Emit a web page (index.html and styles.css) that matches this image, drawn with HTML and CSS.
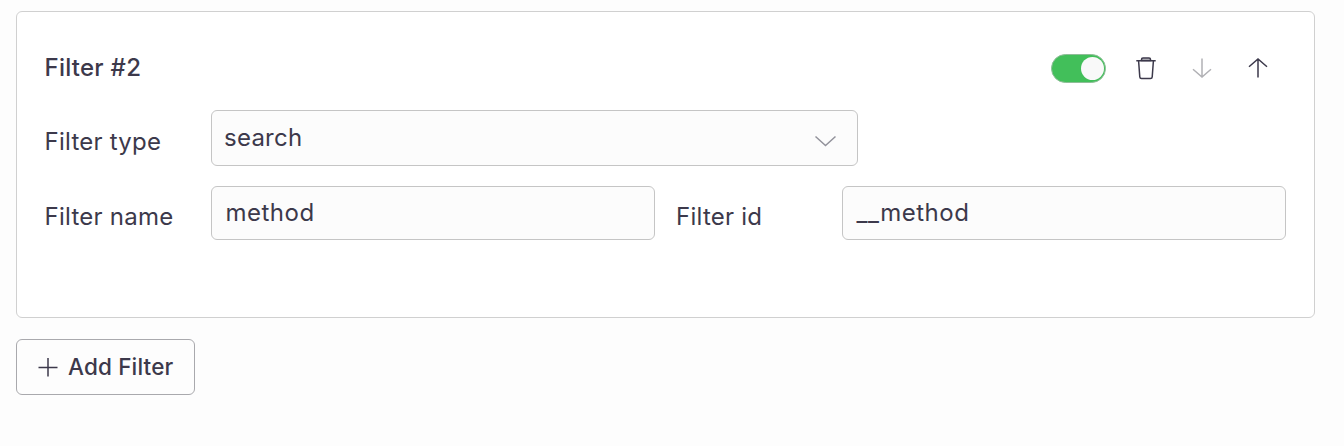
FILE: index.html
```html
<!DOCTYPE html>
<html lang="en">
<head>
<meta charset="utf-8">
<title>Filters</title>
<link rel="stylesheet" href="styles.css">
</head>
<body>
<section class="card">
  <header class="card-header">
    <h2 class="title">Filter #2</h2>
    <div class="actions">
      <span class="toggle" role="switch" aria-checked="true"><span class="knob"></span></span>
      <svg class="icon" viewBox="0 0 28 28"><path class="lid" d="M9.500 6.500V5.500q0-1.500 1.500-1.500h6q1.500 0 1.500 1.500v1z"/><path d="M4.300 6.700h19.400M6.600 7l1.200 16q.1 1.500 1.700 1.500h9q1.600 0 1.700-1.500l1.200-16"/></svg>
      <svg class="icon muted" viewBox="0 0 28 28"><path d="M14 4.500v18.500M5 15.300L14 23l9-7.700"/></svg>
      <svg class="icon" viewBox="0 0 28 28"><path d="M14 23.500V5M5 12.700L14 5l9 7.700"/></svg>
    </div>
  </header>
  <div class="row type-row">
    <span class="label">Filter type</span>
    <div class="select"><span>search</span><svg class="chevron" viewBox="0 0 24 14"><path d="M2.500 2.500l10 9 10-9"/></svg></div>
  </div>
  <div class="row name-row">
    <span class="label">Filter name</span>
    <div class="field">method</div>
    <span class="label id-label">Filter id</span>
    <div class="field">__method</div>
  </div>
</section>
<button class="add"><svg class="plus" viewBox="0 0 20 20"><path d="M10 1v18.500M.5 10.500h19"/></svg><span>Add Filter</span></button>
</body>
</html>
```
FILE: styles.css
```css
* { box-sizing: border-box; }
body {
  margin: 0;
  padding: 11px 29px 0 16px;
  background: #fdfdfd;
  color: #3c394b;
  font-family: Inter, "Liberation Sans", sans-serif;
  font-size: 24px;
  letter-spacing: 0.25px;
  line-height: 32px;
}
.card {
  height: 307px;
  padding: 28px 28px 0 27.5px;
  border: 1px solid #d0d0d0;
  border-radius: 6px;
  background: #fff;
}
.card-header {
  display: flex;
  justify-content: space-between;
  height: 56px;
  align-items: center;
}
.title { margin: 0; font-size: 24px; font-weight: 500; }
.actions { display: flex; align-items: center; gap: 28px; margin-right: 14px; }
.toggle {
  display: flex;
  justify-content: flex-end;
  align-items: center;
  width: 55px;
  height: 29px;
  padding: 0 1.500px;
  border: 1px solid #8fbd98;
  border-radius: 15px;
  background: #42bf5a;
  margin-right: -2px;
}
.knob { width: 23px; height: 23px; border-radius: 50%; background: #f9f9f9; }
.icon { width: 28px; height: 28px; }
svg { fill: none; stroke: #3c394b; stroke-width: 1.5; }
svg.muted { stroke: #b1b1b5; }
.lid { fill: #ccccd0; }
.row { display: flex; }
.type-row { margin-top: 14px; }
.name-row { margin-top: 20px; }
.label { width: 166.5px; padding-top: 15px; }
.type-row .label { padding-top: 16px; }
.id-label { width: 166px; margin-left: 21px; }
.select {
  display: flex;
  justify-content: space-between;
  width: 647px;
  height: 56px;
  padding: 11px 20px 0 12px;
  border: 1px solid #c5c5c5;
  border-radius: 6px;
  background: #fcfcfc;
}
.chevron { width: 24px; height: 14px; margin-top: 12px; stroke: #92929b; }
.field {
  width: 444px;
  height: 54px;
  padding: 10px 13.500px;
  border: 1px solid #c5c5c5;
  border-radius: 6px;
  background: #fcfcfc;
  letter-spacing: 0.5px;
}
.add {
  display: flex;
  align-items: center;
  gap: 10px;
  width: 179px;
  height: 56px;
  margin-top: 21px;
  padding: 0 21px;
  border: 1px solid #a9a9ad;
  border-radius: 6px;
  background: #fdfdfd;
  color: inherit;
  font: 500 22.500px/32px Inter, "Liberation Sans", sans-serif;
  letter-spacing: 0.15px;
  white-space: nowrap;
}
.plus { width: 20px; height: 20px; flex: none; }
```
